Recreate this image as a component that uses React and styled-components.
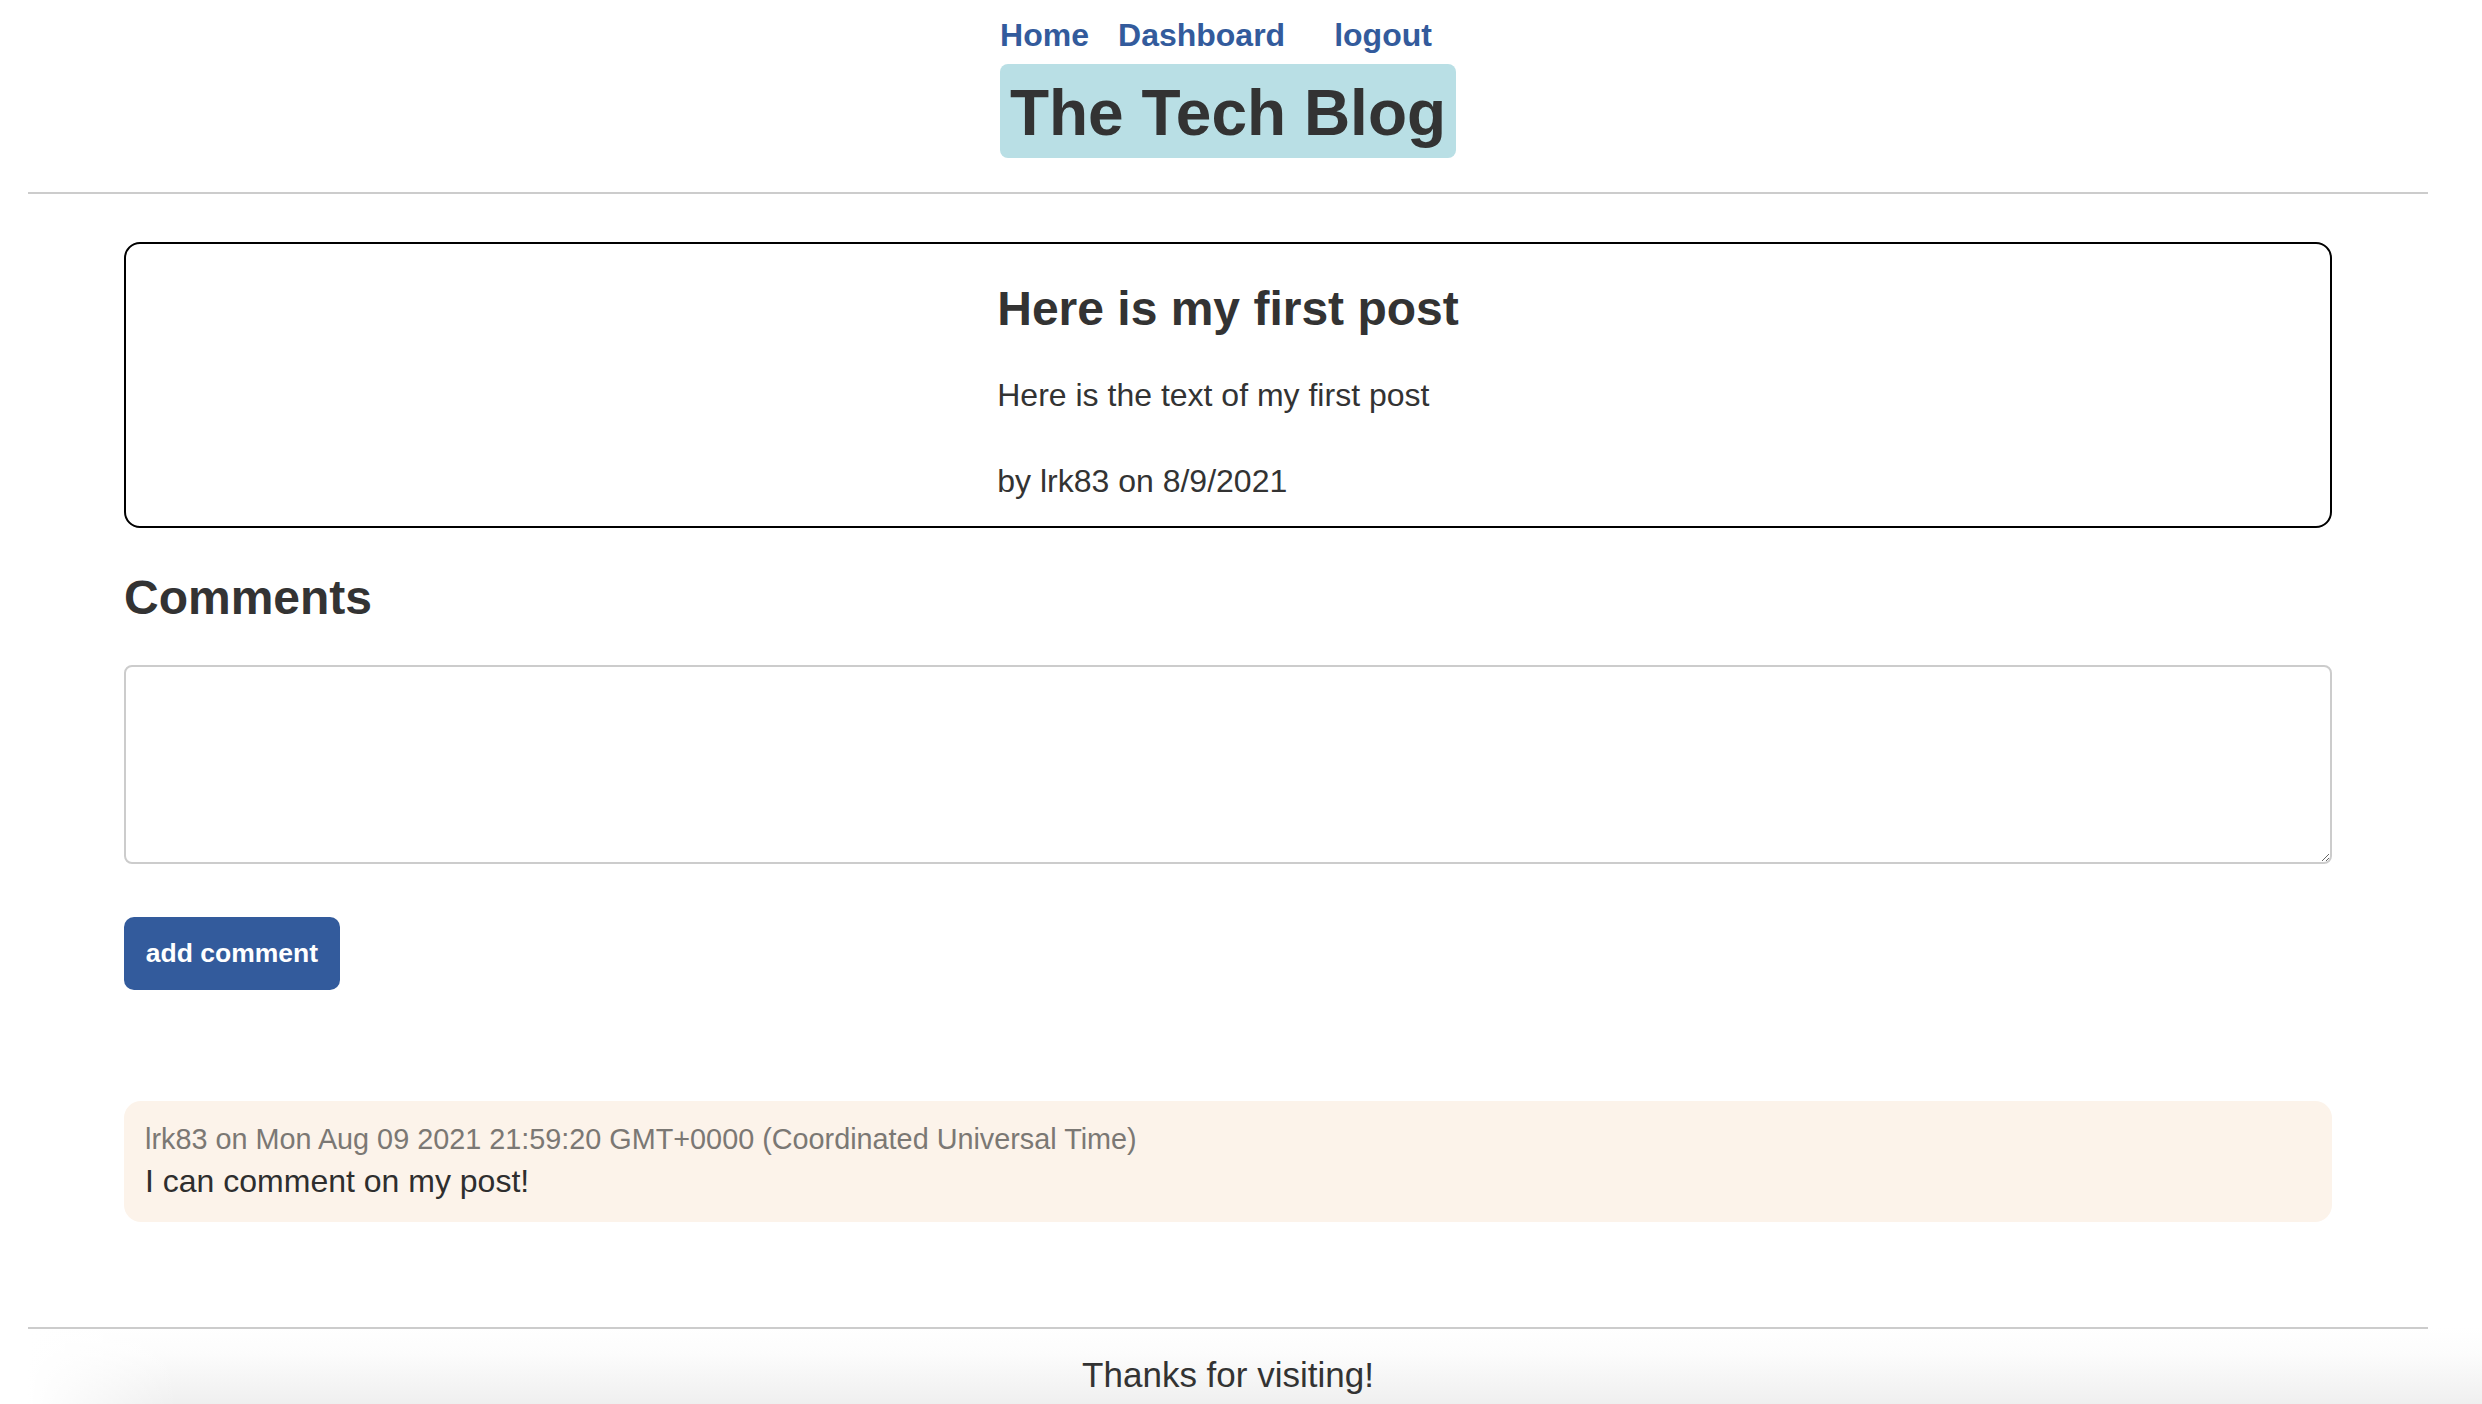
import React from "react";
import styled, { createGlobalStyle } from "styled-components";

const GlobalStyle = createGlobalStyle`
  html, body {
    margin: 0;
    padding: 0;
    background: #ffffff;
  }
  body {
    font-family: "Liberation Sans", Arial, Helvetica, sans-serif;
    color: #333333;
  }
  * { box-sizing: border-box; }
`;

const Page = styled.div`
  padding: 0 54px 0 28px;
`;

const Header = styled.header`
  display: flex;
  flex-direction: column;
  align-items: center;
  padding: 17px 0 34px;
  border-bottom: 2px solid #cccccc;
`;

const Nav = styled.nav`
  display: flex;
  align-items: center;
  gap: 29px;
`;

const NavLink = styled.a`
  font-size: 32px;
  font-weight: 700;
  line-height: normal;
  color: #335b9c;
  text-decoration: none;
`;

const NavButton = styled.button`
  font-family: inherit;
  font-size: 32px;
  font-weight: 700;
  line-height: normal;
  color: #335b9c;
  background: transparent;
  border: none;
  padding: 0 24px 0 20px;
  margin: 0;
  cursor: pointer;
`;

const Title = styled.h1`
  margin: 10px 0 0;
  padding: 12px 10px 7.5px;
  font-size: 64px;
  font-weight: 700;
  line-height: normal;
  color: #333333;
  background: #b9dfe5;
  border-radius: 8px;
`;

const Main = styled.main`
  padding: 48px 96px 0;
  display: flex;
  flex-direction: column;
`;

const PostCard = styled.article`
  border: 2px solid #000000;
  border-radius: 16px;
  padding: 37px 24px 26px;
  display: flex;
  justify-content: center;
`;

const PostBody = styled.div`
  display: flex;
  flex-direction: column;
  align-items: flex-start;
`;

const PostTitle = styled.h2`
  margin: 0;
  font-size: 48px;
  font-weight: 700;
  line-height: normal;
  color: #333333;
`;

const Text = styled.p`
  margin: ${(p) => p.$top}px 0 0;
  font-size: 32px;
  line-height: normal;
  color: #333333;
`;

const SectionTitle = styled.h2`
  margin: 42px 0 0;
  font-size: 48px;
  font-weight: 700;
  line-height: normal;
  color: #333333;
`;

const CommentForm = styled.form`
  display: flex;
  flex-direction: column;
  align-items: flex-start;
`;

const CommentInput = styled.textarea`
  margin-top: 40px;
  width: 100%;
  height: 199px;
  border: 2px solid #cccccc;
  border-radius: 8px;
  font-family: inherit;
  font-size: 28px;
  padding: 12px;
  resize: both;
  outline: none;
`;

const SubmitButton = styled.button`
  margin-top: 53px;
  font-family: inherit;
  font-size: 26.5px;
  font-weight: 700;
  line-height: normal;
  color: #ffffff;
  background: #335b9c;
  border: none;
  border-radius: 10px;
  padding: 21.3px 21.8px;
  cursor: pointer;
`;

const CommentCard = styled.div`
  margin-top: 110.5px;
  background: #fcf3ea;
  border-radius: 17px;
  padding: 22px 21px 22px;
  display: flex;
  flex-direction: column;
`;

const CommentMeta = styled.div`
  font-size: 28.8px;
  line-height: normal;
  color: #7b7874;
`;

const CommentText = styled.div`
  margin-top: 7.7px;
  font-size: 32px;
  line-height: normal;
  color: #2e2e2e;
`;

const Footer = styled.footer`
  margin: 105px -54px 0 0;
  padding: 28px 54px 40px 0;
  text-align: center;
  font-size: 35px;
  line-height: normal;
  color: #333333;
  background:
    linear-gradient(#cccccc, #cccccc) 0 0 / calc(100% - 54px) 2px no-repeat,
    linear-gradient(to right, #ffffff 0, rgba(255, 255, 255, 0) 150px) 0 0 / 100% 100% no-repeat,
    linear-gradient(to bottom, #ffffff 0%, #fcfcfc 25%, #e7e7e7 100%);
`;

export default function App() {
  return (
    <>
      <GlobalStyle />
      <Page>
        <Header>
          <Nav>
            <NavLink href="#">Home</NavLink>
            <NavLink href="#">Dashboard</NavLink>
            <NavButton type="button">logout</NavButton>
          </Nav>
          <Title>The Tech Blog</Title>
        </Header>
        <Main>
          <PostCard>
            <PostBody>
              <PostTitle>Here is my first post</PostTitle>
              <Text $top={41}>Here is the text of my first post</Text>
              <Text $top={49}>by lrk83 on 8/9/2021</Text>
            </PostBody>
          </PostCard>
          <SectionTitle>Comments</SectionTitle>
          <CommentForm onSubmit={(e) => e.preventDefault()}>
            <CommentInput />
            <SubmitButton type="submit">add comment</SubmitButton>
          </CommentForm>
          <CommentCard>
            <CommentMeta>
              lrk83 on Mon Aug 09 2021 21:59:20 GMT+0000 (Coordinated Universal Time)
            </CommentMeta>
            <CommentText>I can comment on my post!</CommentText>
          </CommentCard>
        </Main>
        <Footer>Thanks for visiting!</Footer>
      </Page>
    </>
  );
}
